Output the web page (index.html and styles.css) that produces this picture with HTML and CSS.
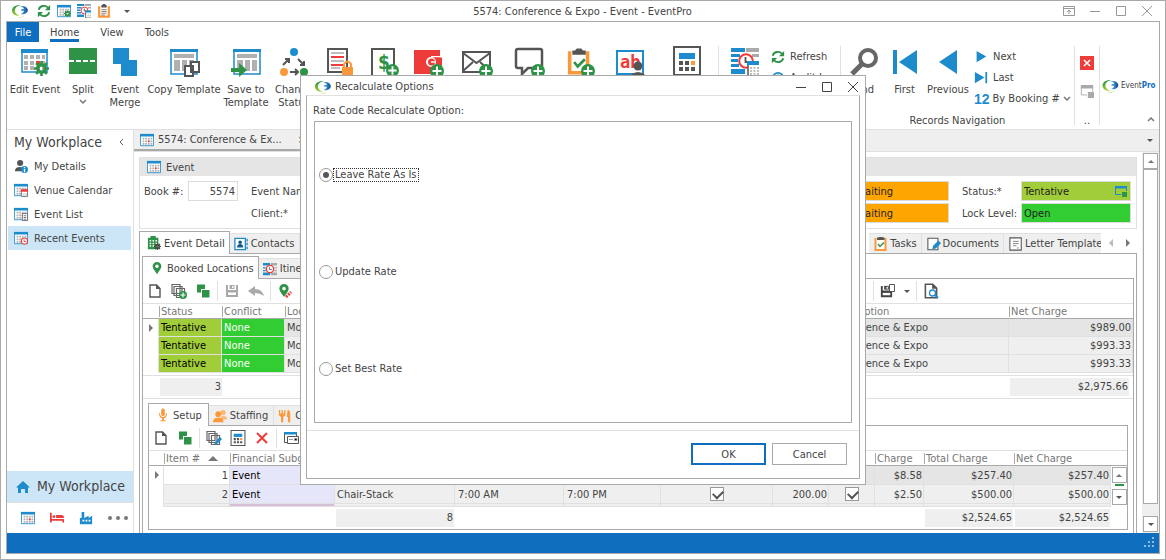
FILE: index.html
```
<!DOCTYPE html>
<html lang="en">
<head>
    <meta charset="UTF-8">
    <meta name="viewport" content="width=device-width, initial-scale=1.0">
    <title>5574: Conference &amp; Expo - Event - EventPro</title>
    <link rel="stylesheet" href="styles.css">
</head>
<body>
    <!-- icon sprite -->
    <svg class="sprite" aria-hidden="true">
        <defs>
            <linearGradient id="gGreen" x1="0" y1="0" x2="0" y2="1"><stop offset="0" stop-color="#1d8f3f"/><stop offset="1" stop-color="#a5d12e"/></linearGradient>
            <linearGradient id="gBlue" x1="0" y1="0" x2="1" y2="0"><stop offset="0" stop-color="#4cc0e8"/><stop offset="1" stop-color="#12479a"/></linearGradient>
        </defs>
        <symbol id="logo" viewBox="0 0 16 14">
            <path fill="url(#gGreen)" d="M9 1C4 .6 0 3 0 6.500c0 3.500 3.500 5.600 8 5.300C5 11 2.800 9 2.800 6.600 2.800 4 5 1.800 9 1z"/>
            <path fill="url(#gBlue)" d="M8 2.200c4-.6 7.800 1 7.800 4 0 2.800-3.300 4.600-7.300 3.800 1.800-.5 3.200-1.600 3.500-3.200H8.500q1.500-.8.500-1.800H12C11.500 3.500 10 2.500 8 2.200z"/>
            <path fill="#b9dc6a" d="M4 12.700c3 .8 6 .3 8-1-1.500 1.800-4.500 2.500-8 1z"/>
        </symbol>
        <symbol id="refresh" viewBox="0 0 16 16">
            <path fill="none" stroke="#2e9247" stroke-width="2.200" d="M2 6.500a6 5.500 0 0 1 10.500-2.300M14 9.500A6 5.500 0 0 1 3.500 11.800"/>
            <path fill="#2e9247" d="M15 1v6H9zM1 15V9h6z"/>
        </symbol>
        <symbol id="cal" viewBox="0 0 16 16">
            <path fill="#fff" stroke="#1e8bcd" d="M.5 2.500h15v12H.500z"/><path fill="#1e8bcd" d="M0 1h16v3H0z"/>
            <path stroke="#b0b0b0" stroke-width="2" stroke-dasharray="2 1" d="M3 6.500h11M3 9.500h11M3 12.500h11"/>
            <path fill="#ee3c3a" d="M9 8.500h2v2H9z"/>
        </symbol>
        <symbol id="gear" viewBox="0 0 16 16">
            <circle cx="8" cy="8" r="4" fill="none" stroke="currentColor" stroke-width="3.500"/>
            <path stroke="currentColor" stroke-width="2.800" d="M8 0v3M8 13v3M0 8h3M13 8h3M2.300 2.300l2.200 2.200M11.500 11.500l2.200 2.200M2.300 13.700l2.200-2.200M11.500 4.500l2.200-2.200"/>
        </symbol>
        <symbol id="itin" viewBox="0 0 28 28">
            <path fill="#1e8bcd" d="M0 0h14v4H0zM0 6h9v3H0zM0 11h7v3H0zM0 16h8v3H0zM0 21h14v5H0z"/>
            <path fill="#a9a9a9" d="M15 0h13v4H15zM21 6h7v3h-7z"/>
            <circle cx="15" cy="13" r="6.800" fill="#fff" stroke="#ee3c3a" stroke-width="2"/>
            <path fill="none" stroke="#555" stroke-width="1.800" d="M14.500 9v5h4"/>
            <path fill="#fff" stroke="#555" stroke-width="1.500" d="M17 14h12v14H17z"/><path fill="#1e8bcd" d="M16 13h14v4H16z"/>
            <path stroke="#aaa" stroke-width="1.500" stroke-dasharray="2 1.500" d="M19 20h9M19 23h9M19 26h9"/>
        </symbol>
        <symbol id="itin-small" viewBox="0 0 16 16">
            <path fill="#1e8bcd" d="M0 1h8v3H0zM0 6h3v1.500H0zM0 9h3v1.500H0zM0 12h8v3H0z"/>
            <path fill="#a9a9a9" d="M9 1h7v3H9zM13 6h3v1.500h-3zM13 9h3v1.500h-3zM9 12h7v3H9z"/>
            <circle cx="8" cy="8" r="4.200" fill="#fff" stroke="#ee3c3a" stroke-width="1.500"/>
            <path fill="none" stroke="#555" d="M7.500 6v2.500H10"/>
        </symbol>
        <symbol id="task" viewBox="0 0 28 28">
            <path fill="#fff" stroke="#fb983a" stroke-width="4" d="M3 2v24h20V2"/>
            <path fill="#555" d="M6 1h3l2-2h5l2 2h3v5H6z"/><path fill="none" stroke="#2e9247" stroke-width="3" d="M8 14l4 5 8-8"/>
        </symbol>
        <symbol id="clip" viewBox="0 0 16 16">
            <path fill="#fff" stroke="#fb983a" stroke-width="2.500" d="M2.500 2.500v12h11v-12"/><path fill="#555" d="M5 1h1.500V0h3v1H11v3H5z"/>
            <path stroke="#777" d="M5 6.500h6M5 8.500h6M5 10.500h6M5 12.500h4"/>
        </symbol>
        <symbol id="plus" viewBox="0 0 14 14">
            <circle cx="7" cy="7" r="7" fill="#2e9247"/><path stroke="#fff" stroke-width="2" d="M7 2.500v9M2.500 7h9"/>
        </symbol>
        <symbol id="calc" viewBox="0 0 28 30">
            <path fill="#fff" stroke="#555" stroke-width="2" d="M1 1h26v28H1z"/><path fill="#1e8bcd" d="M6 7h16v6H6z"/>
            <path fill="#555" d="M6 15h4v4H6zM12 15h4v4h-4zM6 21h4v4H6zM12 21h4v4h-4zM18 21h4v4h-4z"/><path fill="#fb983a" d="M18 15h4v4h-4z"/>
        </symbol>
        <symbol id="page" viewBox="0 0 16 16"><path fill="#fff" stroke="#555" stroke-width="1.400" d="M3 2h6.500L13 5.500V14H3z"/><path fill="#555" d="M9 1.500v4.500h4.500z"/></symbol>
        <symbol id="pages" viewBox="0 0 16 16"><path fill="#fff" stroke="#666" stroke-width="1.200" d="M1 1.500h8v9H1zM3 3.500h8v9H3zM5.500 5.500h8v9h-8z"/></symbol>
        <symbol id="squares" viewBox="0 0 16 16"><path fill="#2e9247" d="M2 1.500h8V6H6v3.500H2z"/><path fill="#2e9247" d="M7 7h7.500v7.500H7z"/></symbol>
        <symbol id="pin" viewBox="0 0 16 16"><path fill="#2e9247" d="M8 1a5 5 0 0 1 5 5c0 3-3.500 6-5 9-1.500-3-5-6-5-9a5 5 0 0 1 5-5z"/><circle cx="8" cy="6" r="1.900" fill="#fff"/></symbol>
        <symbol id="save" viewBox="0 0 16 16"><path fill="currentColor" d="M2 2h2v5h8V2h2v12H2z"/><path fill="#fff" d="M4 9.500h8V12H4z"/><path fill="currentColor" d="M5.500 2h5v4h-5z"/><path fill="#fff" d="M8 3h1.500v2H8z"/></symbol>
    </svg>

    <div class="window">
        <header class="titlebar">
            <div class="quick">
                <svg class="icon"><use href="#logo"/></svg>
                <button aria-label="Refresh"><svg class="icon"><use href="#refresh"/></svg></button>
                <button aria-label="Edit event"><svg class="icon green" viewBox="0 0 16 16"><use href="#cal" width="16" height="16"/><use href="#gear" x="8" y="7" width="8" height="8"/></svg></button>
                <button aria-label="Itinerary"><svg class="icon"><use href="#itin"/></svg></button>
                <button aria-label="Tasks"><svg class="icon"><use href="#clip"/></svg></button>
                <button aria-label="Customize" class="customize"><i class="caret"></i></button>
            </div>
            <div class="title">5574: Conference &amp; Expo - Event - EventPro</div>
            <div class="winbtns">
                <button aria-label="Ribbon options"><svg viewBox="0 0 12 12"><path d="M.5 1.500h11v9H.500zM1 3.500h10M6 9V5M4 7l2-2 2 2"/></svg></button>
                <button aria-label="Minimize"><svg viewBox="0 0 12 12"><path d="M1 6.500h10"/></svg></button>
                <button aria-label="Maximize"><svg viewBox="0 0 12 12"><path d="M1.500 1.500h9v9h-9z"/></svg></button>
                <button aria-label="Close"><svg viewBox="0 0 12 12"><path d="M1 1l10 10M11 1L1 11"/></svg></button>
            </div>
        </header>

        <div class="frame">
            <nav class="menu">
                <a href="#" class="file">File</a>
                <a href="#" class="current">Home</a>
                <a href="#">View</a>
                <a href="#">Tools</a>
            </nav>

            <div class="ribbon">
                <div class="group">
                    <div class="tools tools-event">
                        <button><svg class="big green" viewBox="0 0 28 28"><path fill="#fff" stroke="#1e8bcd" stroke-width="1.500" d="M1 2h25v22H1z"/><path fill="#1e8bcd" d="M0 1h27v4H0z"/><path stroke="#b0b0b0" stroke-width="4" stroke-dasharray="4 2" d="M3 9h21M3 15h21M3 20h21"/><path fill="#ee3c3a" d="M15 13h4v4h-4z"/><use href="#gear" x="13" y="13" width="15" height="15"/></svg>Edit Event</button>
                        <button><svg class="big" viewBox="0 0 28 28"><path fill="#2e9247" d="M0 0h28v26H0z"/><path stroke="#fff" stroke-width="2" stroke-dasharray="5 2" d="M0 13h28"/></svg>Split<svg class="down" viewBox="0 0 8 5"><path d="M1 1l3 3 3-3"/></svg></button>
                        <button><svg class="big" viewBox="0 0 28 28"><path fill="#1e8bcd" d="M2 0h16v12h8v16H10V16H2z"/></svg>Event<br>Merge</button>
                        <button><svg class="big" viewBox="0 0 28 28"><path fill="#fff" stroke="#1e8bcd" stroke-width="1.500" d="M1 2h26v24H1z"/><path fill="#1e8bcd" d="M0 1h28v3H0z"/><path fill="#b0b0b0" d="M4 6h20v4H4zM4 12h6v11H4zM12 12h5v11h-5zM19 12h5v11h-5z"/><path fill="#fff" stroke="#555" stroke-width="2" d="M21 14h8v10h-8zM15 18h8v10h-8z"/></svg>Copy Template</button>
                        <button><svg class="big" viewBox="0 0 28 28"><path fill="#fff" stroke="#1e8bcd" stroke-width="1.500" d="M2 2h26v24H2z"/><path fill="#1e8bcd" d="M1 1h28v3H1z"/><path fill="#b0b0b0" d="M5 6h20v4H5zM5 12h6v11H5zM13 12h5v11h-5zM20 12h5v11h-5z"/><path fill="#2e9247" d="M-1 20h8v-5l8 7-8 7v-5h-8z"/></svg>Save to<br>Template</button>
                        <button><svg class="big" viewBox="0 0 28 28"><circle cx="14" cy="4" r="4" fill="#1e8bcd"/><circle cx="4" cy="24" r="4" fill="#fb983a"/><circle cx="24" cy="24" r="4" fill="#2e9247"/><path fill="none" stroke="#555" stroke-width="2" d="M3 17l6-6M5 11h4v4M18 11l6 6M24 13v4h-4M10 24h8M15 21l3 3-3 3"/></svg>Change<br>Status</button>
                        <button aria-label="Lock"><svg class="big" viewBox="0 0 28 28"><path fill="#fff" stroke="#555" stroke-width="2" d="M2 1h19v23H2z"/><path stroke="#a9a9a9" stroke-width="1.500" d="M5 5h13M5 13h13M5 20h9"/><path stroke="#ee3c3a" stroke-width="2" d="M5 9h13M5 17h13"/><path fill="#fb983a" d="M16 19h11v10H16z"/><path fill="none" stroke="#fb983a" stroke-width="2" d="M18 20v-4q3.500-5 7 0v4"/></svg></button>
                        <button aria-label="Add charge"><svg class="big" viewBox="0 0 28 28"><path fill="#fff" stroke="#555" stroke-width="2" d="M1 1h22v27H1z"/><text x="7" y="21" class="dollar">$</text><use href="#plus" x="15" y="16" width="13" height="13"/></svg></button>
                        <button aria-label="Add payment"><svg class="big" viewBox="0 0 28 28"><path fill="#ee3c3a" d="M-1 2h26v24H-1z"/><path fill="#fff" d="M16 8h11v1.500H16z"/><path fill="#ee3c3a" d="M16 9.500h11V18H16z"/><circle cx="16" cy="14" r="5" fill="#fff"/><circle cx="16.500" cy="14" r="3.500" fill="#ee3c3a"/><path stroke="#fff" stroke-width="1.500" d="M16 14h4"/><use href="#plus" x="15" y="16" width="14" height="14"/></svg></button>
                        <button aria-label="Add email"><svg class="big" viewBox="0 0 28 28"><path fill="none" stroke="#555" stroke-width="2" d="M0 4h27v20H0zM0 5l13.500 10L27 5M0 23l10-9M27 23l-10-9"/><use href="#plus" x="16" y="16" width="14" height="14"/></svg></button>
                        <button aria-label="Add note"><svg class="big" viewBox="0 0 28 28"><path fill="#fff" stroke="#555" stroke-width="2.500" d="M2 1h22q2 0 2 2v15q0 2-2 2H12l-6 6v-6H2q-2 0-2-2V3q0-2 2-2z"/><use href="#plus" x="15" y="16" width="14" height="14"/></svg></button>
                        <button aria-label="Add task"><svg class="big" viewBox="0 0 28 28"><use href="#task" width="25" height="28"/><use href="#plus" x="14" y="16" width="14" height="14"/></svg></button>
                        <button aria-label="Rename"><svg class="big" viewBox="0 0 28 28"><path fill="#fff" stroke="#1e8bcd" stroke-width="2" d="M1 3h26v23H1z"/><text x="4" y="20" class="ab">ab</text><circle cx="22" cy="18" r="4.500" fill="#555"/><path fill="#555" d="M14 30q0-5 8-6 8 1 8 6z"/></svg></button>
                        <button aria-label="Calculate"><svg class="big up"><use href="#calc"/></svg></button>
                    </div>
                </div>
                <div class="group">
                    <div class="tools">
                        <button class="w50" aria-label="Itinerary"><svg class="big"><use href="#itin"/></svg></button>
                        <div class="stack w69">
                            <button><svg class="icon"><use href="#refresh"/></svg>Refresh</button>
                            <button><svg class="icon" viewBox="0 0 16 16"><circle cx="8" cy="8" r="6" fill="none" stroke="#1e8bcd" stroke-width="2"/><path fill="none" stroke="#555" stroke-width="1.500" d="M8 4v4h3"/></svg>Audit Log</button>
                        </div>
                    </div>
                </div>
                <div class="group">
                    <div class="tools">
                        <button class="w46"><svg class="big" viewBox="0 0 28 28"><circle cx="18" cy="10" r="8" fill="none" stroke="#666" stroke-width="4"/><path stroke="#666" stroke-width="5" d="M12 16L2 26"/></svg>Find</button>
                        <button class="w35"><svg class="big" viewBox="0 0 28 28"><path fill="#1e8bcd" d="M2 2h4v24H2zM26 2v24L8 14z"/></svg>First</button>
                        <button class="w50"><svg class="big" viewBox="0 0 28 28"><path fill="#1e8bcd" d="M23 2v24L5 14z"/></svg>Previous</button>
                        <div class="stack nav-stack">
                            <button><svg class="icon" viewBox="0 0 16 16"><path fill="#1e8bcd" d="M3 1v13l11-6.500z"/></svg>Next</button>
                            <button><svg class="icon" viewBox="0 0 16 16"><path fill="#1e8bcd" d="M1 1v13l11-6.500zM13 1h2v13h-2z"/></svg>Last</button>
                            <button class="booking"><b class="twelve">12</b>By Booking #<svg class="down" viewBox="0 0 8 5"><path d="M1 1l3 3 3-3"/></svg></button>
                        </div>
                    </div>
                    <div class="caption">Records Navigation</div>
                </div>
                <div class="group">
                    <div class="tools closers">
                        <button aria-label="Close"><svg class="icon" viewBox="0 0 16 16"><path fill="#ee3c3a" d="M0 0h16v16H0z"/><path stroke="#fff" stroke-width="1.800" d="M4.500 4.500l7 7M11.500 4.500l-7 7"/></svg></button>
                        <button aria-label="Windows"><svg class="icon" viewBox="0 0 16 16"><path fill="none" stroke="#a9a9a9" d="M8 12.500H1.500v-9h13V9"/><path fill="#a9a9a9" d="M1 1h14v4H1zM9 9h7v7H9z"/></svg></button>
                    </div>
                    <div class="caption">..</div>
                </div>
                <div class="brand">
                    <svg class="brand-mark"><use href="#logo"/></svg>Event<b>Pro</b>
                    <button class="collapse" aria-label="Collapse ribbon"><svg class="down" viewBox="0 0 8 5"><path d="M1 4l3-3 3 3"/></svg></button>
                </div>
            </div>

            <div class="body">
                <aside class="side">
                    <h2>My Workplace<svg viewBox="0 0 6 8"><path d="M5 1L2 4l3 3"/></svg></h2>
                    <ul>
                        <li><a href="#"><svg class="icon" viewBox="0 0 16 16"><circle cx="7" cy="4.500" r="3.500" fill="#555"/><path fill="#555" d="M1 14q0-5 6-5 5 0 5 5z"/><circle cx="12" cy="12" r="4" fill="#1e8bcd"/><path stroke="#fff" stroke-width="1.500" d="M12 9v1.200M12 11v4"/></svg>My Details</a></li>
                        <li><a href="#"><svg class="icon" viewBox="0 0 16 16"><use href="#cal" width="16" height="16"/><path fill="#fff" stroke="#777" d="M8.500 8.500h7v7h-7z"/><path fill="#ee3c3a" d="M8 7h8v3H8z"/><path stroke="#999" stroke-dasharray="1 1" d="M10 12.500h5M10 14h5"/></svg>Venue Calendar</a></li>
                        <li><a href="#"><svg class="icon" viewBox="0 0 16 16"><use href="#cal" width="16" height="16"/><path fill="#fff" stroke="#666" d="M9.500 7.500h6v8h-6z"/><path stroke="#666" d="M11 10h3M11 12h3M11 14h3"/></svg>Event List</a></li>
                        <li class="selected"><a href="#"><svg class="icon" viewBox="0 0 16 16"><use href="#cal" width="16" height="16"/><circle cx="12" cy="11.500" r="3.500" fill="#fff" stroke="#ee3c3a" stroke-width="1.200"/><path fill="none" stroke="#ee3c3a" d="M11.500 9.500v2.500H14"/></svg>Recent Events</a></li>
                    </ul>
                    <a href="#" class="workplace"><svg viewBox="0 0 14 14"><path fill="#1e8bcd" d="M7 1l7 6.500h-2V13H9V9H5v4H2V7.500H0z"/></svg>My Workplace</a>
                    <div class="modules">
                        <button aria-label="Calendar"><svg class="icon"><use href="#cal"/></svg></button>
                        <button aria-label="Accommodation"><svg class="icon" viewBox="0 0 16 16"><path fill="#ee3c3a" d="M0 2h2v7h14v4h-2v-2H2v2H0zM7 4.500h6q3 0 3 3.500H7z"/><circle cx="4.500" cy="6.500" r="1.600" fill="#ee3c3a"/></svg></button>
                        <button aria-label="Venue"><svg class="icon" viewBox="0 0 16 16"><path fill="#1e8bcd" d="M1 8h2V1h3v7l5-2.500V8l4-2.500V15H1z"/><path fill="#fff" d="M4 10h2v2H4zM7.500 10h2v2h-2zM11 10h2v2h-2z"/></svg></button>
                        <button aria-label="More"><svg class="dots" viewBox="0 0 20 4"><circle cx="2" cy="2" r="2"/><circle cx="10" cy="2" r="2"/><circle cx="18" cy="2" r="2"/></svg></button>
                    </div>
                </aside>

                <main class="main">
                    <div class="doctabs">
                        <div class="doctab"><svg class="icon"><use href="#cal"/></svg>5574: Conference &amp; Ex...<span>×</span></div>
                        <i class="caret"></i>
                    </div>
                    <div class="workarea">
                        <div class="content">
                            <section class="panel">
                                <h3><svg class="icon"><use href="#cal"/></svg>Event</h3>
                                <div class="fields">
                                    <label for="book">Book #:</label><input id="book" class="num" value="5574">
                                    <label for="ename" class="gap">Event Name:</label><input id="ename">
                                    <input class="orange" aria-label="Event approval" value="Waiting">
                                    <label for="status" class="gap">Status:*</label>
                                    <span class="picker"><input id="status" class="lime" value="Tentative"><svg viewBox="0 0 12 12"><path fill="none" stroke="#1e8bcd" d="M6 9.500H.500v-8h11V6"/><path fill="#1e8bcd" d="M0 1h12v2.500H0z"/><path fill="#2e9247" d="M7 7h5v5H7z"/></svg></span>
                                    <label for="client" class="gap client">Client:*</label><input id="client">
                                    <input class="orange" aria-label="Client approval" value="Waiting">
                                    <label for="lock" class="gap">Lock Level:</label><input id="lock" class="green-bg" value="Open">
                                </div>
                            </section>

                            <div class="tabs">
                                <button class="tab on"><svg class="icon" viewBox="0 0 16 16"><path fill="#2e9247" d="M1 2h3V0h6v2h3v13H1z"/><path stroke="#fff" stroke-width="1.800" stroke-dasharray="1.800 1.500" d="M3 5.500h9M3 8.500h9M3 11.500h9"/><use href="#gear" x="8" y="8" width="8" height="8"/></svg>Event Detail</button>
                                <button class="tab"><svg class="icon" viewBox="0 0 16 16"><path fill="#fff" stroke="#1e8bcd" stroke-width="1.500" d="M1 1.500h12v13H1z"/><circle cx="7" cy="6" r="2" fill="#14568c"/><path fill="#14568c" d="M3.500 12q0-4 3.500-4t3.500 4z"/><path stroke="#1e8bcd" stroke-width="1.500" d="M15 2v3M15 6.500v3M15 11v3"/></svg>Contacts</button>
                                <div class="tabs-end">
                                    <button class="tab"><svg class="icon"><use href="#task"/></svg>Tasks</button>
                                    <button class="tab"><svg class="icon" viewBox="0 0 16 16"><path fill="#fff" stroke="#555" stroke-width="1.200" d="M1 1.500h11.500v13H1z"/><path fill="#1e8bcd" d="M6 14l1-4 6-6 3 3-6 6z"/></svg>Documents</button>
                                    <button class="tab last"><svg class="icon" viewBox="0 0 16 16"><path fill="#fff" stroke="#555" stroke-width="1.200" d="M1 1h13v14H1z"/><path stroke="#777" d="M4.500 5h6.500M4.500 7.500h6.500M4.500 10h4M9 12.500h2"/></svg>Letter Templates</button>
                                </div>
                                <div class="tab-arrows"><i class="left"></i><i class="right"></i></div>
                            </div>

                            <div class="page page-detail">
                                <div class="tabs">
                                    <button class="tab on"><svg class="icon"><use href="#pin"/></svg>Booked Locations</button>
                                    <button class="tab"><svg class="icon"><use href="#itin-small"/></svg>Itinerary</button>
                                </div>
                                <div class="page page-booked">
                                    <div class="toolbar">
                                        <button aria-label="New"><svg class="icon"><use href="#page"/></svg></button>
                                        <button aria-label="Add copies"><svg class="icon" viewBox="0 0 16 16"><use href="#pages" width="16" height="16"/><use href="#plus" x="8" y="8" width="8" height="8"/></svg></button>
                                        <button aria-label="Duplicate"><svg class="icon"><use href="#squares"/></svg></button>
                                        <hr>
                                        <button aria-label="Save" class="dim"><svg class="icon"><use href="#save"/></svg></button>
                                        <button aria-label="Undo" class="dim"><svg class="icon" viewBox="0 0 16 16"><path fill="currentColor" d="M0 8l7-5v3q7 0 9 7-4-3-9-3v3z"/></svg></button>
                                        <hr>
                                        <button aria-label="Location"><svg class="icon" viewBox="0 0 16 16"><use href="#pin" x="-1" width="16" height="15"/><path stroke="#ee3c3a" stroke-width="3" stroke-dasharray="2 1" d="M9 14l5-5"/></svg></button>
                                        <div class="toolbar-end">
                                            <hr>
                                            <button aria-label="Save layout"><svg class="icon" viewBox="0 0 16 16"><use href="#save" x="-1" y="1" width="15" height="15"/><path fill="#fff" stroke="#555" d="M9.500 1.500h5v7h-5z"/></svg></button>
                                            <i class="caret"></i>
                                            <hr>
                                            <button aria-label="Preview"><svg class="icon" viewBox="0 0 16 16"><use href="#page" x="-1" y="-1" width="18" height="18"/><circle cx="9.500" cy="10" r="3" fill="#fff" stroke="#1e8bcd" stroke-width="1.300"/><path stroke="#1e8bcd" stroke-width="2" d="M12 12l3 3"/></svg></button>
                                        </div>
                                    </div>
                                    <table class="grid">
                                        <colgroup><col class="c16"><col class="c63"><col class="c63"><col><col class="c178"><col class="c124"></colgroup>
                                        <thead>
                                            <tr><th></th><th><span>Status</span></th><th><span>Conflict</span></th><th><span>Location</span></th><th><span>Description</span></th><th><span>Net Charge</span></th></tr>
                                        </thead>
                                        <tbody>
                                            <tr class="focus"><td class="ind"><i class="right"></i></td><td class="tent">Tentative</td><td class="none">None</td><td>Mo</td><td>Conference &amp; Expo</td><td class="num">$989.00</td></tr>
                                            <tr><td class="ind"></td><td class="tent">Tentative</td><td class="none">None</td><td>Mo</td><td>Conference &amp; Expo</td><td class="num">$993.33</td></tr>
                                            <tr><td class="ind"></td><td class="tent">Tentative</td><td class="none">None</td><td>Mo</td><td>Conference &amp; Expo</td><td class="num">$993.33</td></tr>
                                        </tbody>
                                    </table>
                                    <div class="totals totals-booked"><output>3</output><output>$2,975.66</output></div>

                                    <div class="setup">
                                        <div class="tabs">
                                            <button class="tab on"><svg class="icon" viewBox="0 0 16 16"><path fill="#fb983a" d="M6 2q2-3 4 0v6q-2 3-4 0zM7 11h2v3h2v1H5v-1h2z"/><path fill="none" stroke="#fb983a" stroke-width="1.300" d="M4 6q0 5 4 5t4-5"/></svg>Setup</button>
                                            <button class="tab"><svg class="icon" viewBox="0 0 16 16"><circle cx="11.500" cy="4" r="3" fill="#fcb875"/><path fill="#fcb875" d="M8 12q0-4 4-4t4 4z"/><circle cx="6" cy="6" r="3.300" fill="#fb983a"/><path fill="#fb983a" d="M0 15q0-5 6-5t6 5z"/></svg>Staffing</button>
                                            <button class="tab"><svg class="icon" viewBox="0 0 16 16"><path fill="#fb983a" d="M1 1h1.500v4H4V1h1.500v4H7V1h1.500v6L6 9v6H3.500V9L1 7z"/><path fill="#fb983a" d="M11 1q3 0 3 5v9h-2.500V9H10z"/></svg>Catering</button>
                                        </div>
                                        <div class="page page-setup">
                                            <div class="toolbar">
                                                <button aria-label="New"><svg class="icon"><use href="#page"/></svg></button>
                                                <button aria-label="Duplicate"><svg class="icon"><use href="#squares"/></svg></button>
                                                <hr>
                                                <button aria-label="Edit copies"><svg class="icon" viewBox="0 0 16 16"><use href="#pages" width="16" height="16"/><path stroke="#1e8bcd" stroke-width="3" d="M9 14l6-6"/></svg></button>
                                                <button aria-label="Recalculate"><svg class="icon"><use href="#calc"/></svg></button>
                                                <button aria-label="Delete"><svg class="icon" viewBox="0 0 16 16"><path stroke="#ee3c3a" stroke-width="2" d="M3 3l10 10M13 3L3 13"/></svg></button>
                                                <hr>
                                                <button aria-label="Details"><svg class="icon" viewBox="0 0 16 16"><path fill="#fff" stroke="#555" d="M1.500 2.500h12v10h-12z"/><path fill="#1e8bcd" d="M1 2h13v2.500H1z"/><path fill="#fff" stroke="#555" d="M4.500 6.500h11v7h-11z"/><path stroke="#999" d="M6 9.500h4M11.500 8.500h2.500v2h-2.500z"/></svg></button>
                                            </div>
                                            <div class="scrolled">
                                                <table class="grid">
                                                    <colgroup><col class="c15"><col class="c66"><col class="c105"><col class="c120"><col class="c109"><col class="c97"><col><col class="c56"><col class="c46"><col class="c49"><col class="c90"><col class="c97"></colgroup>
                                                    <thead>
                                                        <tr><th></th><th><span>Item # <i class="sort"></i></span></th><th><span>Financial Subgroup</span></th><th><span>Item</span></th><th><span>Start</span></th><th><span>End</span></th><th></th><th></th><th></th><th><span>Charge</span></th><th><span>Total Charge</span></th><th><span>Net Charge</span></th></tr>
                                                    </thead>
                                                    <tbody>
                                                        <tr class="focus"><td class="ind"><i class="right"></i></td><td class="num white">1</td><td class="lav">Event</td><td></td><td></td><td></td><td></td><td></td><td></td><td class="num">$8.58</td><td class="num">$257.40</td><td class="num">$257.40</td></tr>
                                                        <tr><td class="ind"></td><td class="num">2</td><td class="lav">Event</td><td>Chair-Stack</td><td class="time">7:00 AM</td><td class="time">7:00 PM</td><td class="tick"><input type="checkbox" aria-label="Included" checked></td><td class="num">200.00</td><td class="tick"><input type="checkbox" aria-label="Taxable" checked></td><td class="num">$2.50</td><td class="num">$500.00</td><td class="num">$500.00</td></tr>
                                                        <tr class="sliver"><td class="ind"></td><td></td><td class="thistle"></td><td></td><td></td><td></td><td></td><td></td><td></td><td></td><td></td><td></td></tr>
                                                    </tbody>
                                                </table>
                                                <div class="minibar"><b></b><button aria-label="Scroll up"><i class="upar"></i></button><u></u><button aria-label="Scroll down"><i class="caret"></i></button></div>
                                            </div>
                                            <div class="totals totals-setup"><output>8</output><output>$2,524.65</output><output>$2,524.65</output></div>
                                        </div>
                                    </div>
                                </div>
                            </div>
                        </div>
                        <div class="scrollbar"><button aria-label="Scroll up"><i class="upar"></i></button><div class="thumb"></div><button aria-label="Scroll down"><i class="caret"></i></button></div>
                    </div>
                </main>
            </div>

            <footer class="statusbar"><svg viewBox="0 0 12 12"><path d="M8 0h2v2H8zM4 4h2v2H4zM8 4h2v2H8zM0 8h2v2H0zM4 8h2v2H4zM8 8h2v2H8z"/></svg></footer>
        </div>
    </div>

    <div class="overlay">
        <form class="dialog" role="dialog" aria-labelledby="dlgTitle">
            <div class="dialog-title">
                <svg class="icon"><use href="#logo"/></svg><span id="dlgTitle">Recalculate Options</span>
                <div class="winbtns dark">
                    <button type="button" aria-label="Minimize"><svg viewBox="0 0 12 12"><path d="M1 6.500h10"/></svg></button>
                    <button type="button" aria-label="Maximize"><svg viewBox="0 0 12 12"><path d="M1.500 1.500h9v9h-9z"/></svg></button>
                    <button type="button" aria-label="Close"><svg viewBox="0 0 12 12"><path d="M1 1l10 10M11 1L1 11"/></svg></button>
                </div>
            </div>
            <div class="dialog-body">
                <p id="rateLabel">Rate Code Recalculate Option:</p>
                <div class="options" role="radiogroup" aria-labelledby="rateLabel">
                    <label><input type="radio" name="rate" checked><span>Leave Rate As Is</span></label>
                    <label><input type="radio" name="rate"><span>Update Rate</span></label>
                    <label><input type="radio" name="rate"><span>Set Best Rate</span></label>
                </div>
                <div class="actions">
                    <button type="button" class="ok">OK</button>
                    <button type="button">Cancel</button>
                </div>
            </div>
        </form>
    </div>
</body>
</html>
```
FILE: styles.css
```
* {
    box-sizing: border-box;
}

body {
    margin: 0;
    background: #fff;
    color: #444;
    font-family: "DejaVu Sans Condensed", "DejaVu Sans", sans-serif;
    font-size: 11px;
    line-height: 13px;
    overflow: hidden;
}

button, input {
    font: inherit;
    color: inherit;
    margin: 0;
}

button {
    background: none;
    border: 0;
    padding: 0;
}

a {
    color: inherit;
    text-decoration: none;
}

svg {
    display: block;
    flex: none;
    overflow: visible;
}

.sprite {
    position: absolute;
    width: 0;
    height: 0;
}

.icon {
    width: 14px;
    height: 14px;
}

.green {
    color: #2e9247;
}

/* small arrows */
.caret, .upar, .sort, .left, .right {
    display: inline-block;
    width: 0;
    height: 0;
    border: 3px solid transparent;
    vertical-align: middle;
}

.caret {
    border-top-color: #555;
    border-bottom: 0;
}

.upar, .sort {
    border-bottom-color: #777;
    border-top: 0;
}

.sort {
    border-width: 0 5px 5px;
    margin-left: 5px;
}

.left, .right {
    border-width: 4px;
}

.left {
    border-right-color: #bbb;
    border-left: 0;
}

.right {
    border-left-color: #777;
    border-right: 0;
}

/* main window */
.window {
    height: 100vh;
    border: 1px solid #a9a9a9;
    display: flex;
    flex-direction: column;
}

.titlebar {
    height: 20px;
    flex: none;
    display: flex;
    align-items: center;
    padding: 0 11px;
}

.quick, .winbtns {
    flex: 1;
    display: flex;
    align-items: center;
    gap: 6px;
}

.quick > .icon {
    width: 16px;
    margin-right: 3px;
}

.customize {
    display: flex;
    margin-left: 7px;
}

.winbtns {
    justify-content: flex-end;
    gap: 14px;
}

.titlebar .winbtns {
    padding-right: 1px;
}

.winbtns svg {
    width: 12px;
    height: 12px;
    fill: none;
    stroke: #999;
}

.winbtns.dark svg {
    stroke: #444;
}

.frame {
    flex: 1;
    min-height: 0;
    margin: 0 5px 5px;
    border: 1px solid #a9a9a9;
    display: flex;
    flex-direction: column;
}

.menu {
    display: flex;
    height: 20px;
    flex: none;
}

.menu a {
    margin-left: 21px;
    padding-top: 4px;
    height: 20px;
}

.menu .file {
    margin: 0;
    width: 32px;
    text-align: center;
    background: #106ebe;
    color: #fff;
}

.menu .current {
    margin-left: 11px;
    border-bottom: 3px solid #106ebe;
}

/* ribbon */
.ribbon {
    height: 88px;
    flex: none;
    display: flex;
    padding: 4px 0;
    border-bottom: 1px solid #e0e0e0;
}

.group {
    display: flex;
    flex-direction: column;
    justify-content: space-between;
    border-right: 1px solid #e0e0e0;
}

.tools {
    display: flex;
    padding-top: 2px;
}

.tools-event {
    display: grid;
    grid-template-columns: 56px 40px 44px 74px 50px 46px 46px 44px 44px 52px 54px 48px 50px 63px;
}

.tools > button {
    display: flex;
    flex-direction: column;
    align-items: center;
    white-space: nowrap;
    align-self: start;
}

.big {
    width: 28px;
    height: 28px;
    margin-bottom: 7px;
}

.big.up {
    height: 30px;
    margin-top: -2px;
}

.dollar {
    fill: #2e9247;
    font-size: 19px;
    font-weight: bold;
}

.ab {
    fill: #ee3c3a;
    font: bold 17px "DejaVu Sans Mono", monospace;
}

.down {
    width: 8px;
    height: 5px;
    margin: 3px;
    fill: none;
    stroke: #777;
    stroke-width: 1.5;
}

.w35 {
    width: 35px;
}

.w46 {
    width: 46px;
}

.w50 {
    width: 52px;
}

.w69 {
    width: 69px;
}

.stack {
    margin-top: -2px;
}

.stack button {
    display: flex;
    align-items: center;
    height: 21px;
    gap: 5px;
    white-space: nowrap;
}

.stack .booking {
    gap: 3px;
}

.stack .down {
    margin: 0;
}

.nav-stack {
    width: 100px;
}

.twelve {
    color: #1e8bcd;
    font: bold 14px "Liberation Sans", sans-serif;
}

.caption {
    text-align: center;
    line-height: 8px;
}

.closers {
    flex-direction: column;
    gap: 14px;
    padding: 10px 5px 0;
}

.brand {
    flex: 1;
    display: flex;
    align-items: center;
    padding-left: 2px;
    font: 8px "DejaVu Sans Condensed", sans-serif;
    position: relative;
}

.brand b {
    color: #106ebe;
}

.brand-mark {
    width: 17px;
    height: 14px;
    margin-right: 2px;
}

.collapse {
    position: absolute;
    right: 1px;
    bottom: 0;
}

/* left navigation */
.body {
    flex: 1;
    min-height: 0;
    display: flex;
}

.side {
    width: 127px;
    flex: none;
    display: flex;
    flex-direction: column;
    border-right: 1px solid #e0e0e0;
}

.side h2 {
    display: flex;
    align-items: center;
    justify-content: space-between;
    margin: 0;
    height: 24px;
    padding: 0 9px 0 7px;
    font-size: 14px;
    font-weight: normal;
}

.side h2 svg {
    width: 6px;
    height: 8px;
    fill: none;
    stroke: #666;
}

.side ul {
    list-style: none;
    margin: 0;
    padding: 0 2px 0 1px;
    flex: 1;
}

.side li a {
    display: flex;
    align-items: center;
    gap: 6px;
    height: 24px;
    padding-left: 6px;
}

.side .selected, .workplace {
    background: #cde6f7;
}

.workplace {
    display: flex;
    align-items: center;
    height: 32px;
    gap: 7px;
    padding-left: 9px;
    font-size: 14px;
    border-bottom: 1px solid #e0e0e0;
}

.workplace svg {
    width: 14px;
    height: 14px;
}

.modules {
    height: 30px;
    display: flex;
    align-items: center;
    gap: 15px;
    padding-left: 14px;
}

.dots {
    width: 20px;
    height: 4px;
    fill: #777;
}

/* document area */
.main {
    flex: 1;
    min-width: 0;
    display: flex;
    flex-direction: column;
}

.doctabs {
    height: 22px;
    flex: none;
    display: flex;
    justify-content: space-between;
    align-items: center;
    padding-right: 6px;
    background: #efefef;
    border-bottom: 1px solid #e0e0e0;
}

.doctab {
    display: flex;
    align-items: center;
    align-self: stretch;
    gap: 4px;
    width: 172px;
    padding-left: 6px;
    border-bottom: 2px solid #a9a9a9;
}

.doctab span {
    margin-left: auto;
}

.workarea {
    flex: 1;
    min-height: 0;
    display: flex;
}

.content {
    flex: 1;
    min-width: 0;
    display: flex;
    flex-direction: column;
    padding: 5px 5px 0;
}

.panel {
    flex: none;
    border: 1px solid #e0e0e0;
    margin-bottom: 2px;
}

.panel h3 {
    display: flex;
    align-items: center;
    gap: 5px;
    margin: 0;
    height: 18px;
    padding-left: 7px;
    background: #e5e5e5;
    font-size: 11px;
    font-weight: normal;
}

.fields {
    display: grid;
    grid-template-columns: 44px 50px 80px 1fr 96px 72px 110px;
    grid-auto-rows: 20px;
    row-gap: 2px;
    align-items: center;
    padding: 5px 5px 5px 4px;
}

.fields input {
    width: 100%;
    height: 20px;
    min-width: 0;
    border: 1px solid #dcdcdc;
    padding: 0 2px;
}

.fields .gap {
    padding-left: 13px;
}

.fields .client {
    grid-column: 3;
}

.fields .orange {
    background: #ffa500;
    color: #222;
}

.fields .lime {
    background: #a2cd3a;
    color: #222;
}

.fields .green-bg {
    background: #32cd32;
    color: #222;
}

.picker {
    position: relative;
}

.picker svg {
    position: absolute;
    right: 4px;
    top: 4px;
    width: 12px;
    height: 12px;
}

.num {
    text-align: right;
}

.tabs {
    display: flex;
    align-items: flex-end;
    height: 22px;
    flex: none;
}

.tab {
    display: flex;
    align-items: center;
    gap: 3px;
    height: 20px;
    padding: 0 5px 0 4px;
    background: #efefef;
    border: 1px solid #e0e0e0;
    border-width: 1px 1px 0 0;
    white-space: nowrap;
}

.tab.on {
    position: relative;
    height: 23px;
    margin-bottom: -1px;
    padding: 0 4px 0 7px;
    background: #fff;
    border: 1px solid #a9a9a9;
    border-bottom: 0;
}

.setup .tab.on {
    padding-right: 6px;
}

.tabs-end {
    display: flex;
    margin-left: auto;
}

.tabs-end .tab {
    gap: 2px;
    padding: 0 4px 0 5px;
}

.tabs-end .last {
    width: 97px;
    overflow: hidden;
    padding-right: 0;
    border-right: 0;
}

.tab-arrows {
    display: flex;
    align-items: center;
    gap: 13px;
    height: 20px;
    padding: 0 7px 0 8px;
}

.page {
    border: 1px solid #a9a9a9;
}

.page-detail, .page-booked {
    flex: 1;
    min-height: 0;
    border-bottom: 0;
    display: flex;
    flex-direction: column;
}

.page-detail {
    padding: 2px 2px 0;
}

.setup {
    padding: 4px 5px 0;
}

.toolbar {
    display: flex;
    align-items: center;
    gap: 8px;
    height: 24px;
    flex: none;
    padding-left: 4px;
}

.toolbar .icon {
    width: 16px;
    height: 16px;
}

.toolbar hr {
    width: 1px;
    height: 20px;
    margin: 0 -2px;
    border: 0;
    background: #e0e0e0;
}

.dim {
    color: #a9a9a9;
}

.toolbar-end {
    display: flex;
    align-items: center;
    gap: 8px;
    width: 258px;
    margin-left: auto;
}

/* data grids */
.grid {
    width: 100%;
    table-layout: fixed;
    border-spacing: 0;
    border-top: 1px solid #e0e0e0;
}

.grid th {
    height: 15px;
    padding: 0;
    border-bottom: 1px solid #a9a9a9;
    text-align: left;
    font-weight: normal;
    color: #777;
    white-space: nowrap;
    overflow: hidden;
}

.grid th span {
    display: block;
    line-height: 11px;
    border-left: 1px solid #a9a9a9;
    padding-left: 1px;
}

.grid td {
    height: 18px;
    padding: 0 1px 0 2px;
    background: #efefef;
    border-right: 1px solid #e0e0e0;
    border-bottom: 1px solid #e0e0e0;
    white-space: nowrap;
    overflow: hidden;
}

.grid .focus td {
    background: #e5e5e5;
}

.grid tr td.ind {
    background: #fff;
    border-bottom-color: #fff;
    text-align: center;
    line-height: 8px;
}

.grid tr td.tent {
    background: #a2cd3a;
    color: #000;
}

.grid tr td.none {
    background: #32cd32;
    color: #fff;
}

.grid tr td.white {
    background: #fff;
}

.grid tr td.lav {
    background: #e6e6fa;
    color: #000;
}

.grid tr td.thistle {
    background: #d8bfd8;
}

.grid td.time {
    padding-left: 3px;
}

.grid td.tick {
    text-align: center;
    line-height: 14px;
}

.c15 { width: 15px; }
.c16 { width: 16px; }
.c46 { width: 46px; }
.c49 { width: 49px; }
.c56 { width: 56px; }
.c63 { width: 63px; }
.c66 { width: 66px; }
.c90 { width: 90px; }
.c97 { width: 97px; }
.c105 { width: 105px; }
.c109 { width: 109px; }
.c120 { width: 120px; }
.c124 { width: 124px; }
.c178 { width: 178px; }

.page-setup .grid td {
    height: 19px;
}

.page-setup .grid .sliver td {
    height: 3px;
    line-height: 1px;
}

input[type="checkbox"] {
    appearance: none;
    display: block;
    width: 14px;
    height: 14px;
    margin: 0 auto;
    border: 1px solid #999;
    background: #fff;
}

input[type="checkbox"]:checked::before {
    content: "";
    display: block;
    width: 8px;
    height: 5px;
    margin: 2px;
    border: 2px solid #555;
    border-width: 0 0 2px 2px;
    transform: rotate(-45deg);
}

.totals {
    display: grid;
    border-bottom: 1px solid #e0e0e0;
}

.totals output {
    background: #efefef;
    height: 18px;
    line-height: 18px;
    padding-right: 1px;
    text-align: right;
}

.totals-booked {
    grid-template-columns: 62px 119px;
    justify-content: space-between;
    margin-top: 2px;
    padding: 2px 4px 2px 17px;
    border-top: 1px solid #e0e0e0;
}

.totals-setup {
    grid-template-columns: 118px 1fr 88px 95px;
    column-gap: 2px;
    padding: 2px 17px 2px 187px;
    border-bottom: 0;
}

.totals-setup output:nth-child(2) {
    grid-column: 3;
}

.scrolled {
    display: flex;
    align-items: flex-start;
}

.scrolled .grid {
    flex: 1;
    min-width: 0;
    width: auto;
}

.minibar {
    width: 16px;
    flex: none;
    display: flex;
    flex-direction: column;
    align-items: center;
    gap: 1px;
    border-top: 1px solid #e0e0e0;
}

.minibar b {
    align-self: stretch;
    height: 15px;
    border-bottom: 1px solid #a9a9a9;
}

.minibar u {
    width: 9px;
    height: 2px;
    margin: 0 0 2px;
    background: #2e9247;
}

.minibar button, .scrollbar button {
    display: flex;
    align-items: center;
    justify-content: center;
    width: 15px;
    height: 16px;
    border: 1px solid #a9a9a9;
    background: #fff;
}

.scrollbar {
    width: 17px;
    flex: none;
    display: flex;
    flex-direction: column;
    align-items: center;
    padding: 1px 0;
    background: #efefef;
}

.scrollbar .thumb {
    flex: 1;
    width: 15px;
    margin-bottom: 12px;
    border: 1px solid #a9a9a9;
    background: #fff;
}

.statusbar {
    display: flex;
    justify-content: flex-end;
    align-items: center;
    height: 20px;
    flex: none;
    padding-right: 3px;
    background: #106ebe;
}

.statusbar svg {
    width: 12px;
    height: 12px;
    fill: #8db9df;
}

/* recalculate dialog */
.overlay {
    position: fixed;
    inset: 0;
    display: grid;
    place-items: center;
}

.dialog {
    width: 566px;
    max-width: 100%;
    padding: 0 5px 5px;
    background: #fff;
    border: 1px solid #a9a9a9;
}

.dialog-title {
    display: flex;
    align-items: center;
    gap: 4px;
    height: 19px;
    padding: 2px 1px 0 9px;
}

.dialog-title .icon {
    width: 16px;
}

.dialog-body {
    border: 1px solid #a9a9a9;
    border-top-color: #e0e0e0;
}

.dialog-body p {
    margin: 0;
    padding: 8px 7px 4px 6px;
}

.options {
    display: grid;
    grid-auto-rows: 97px;
    margin: 0 7px;
    padding: 4px 4px 5px;
    border: 1px solid #a9a9a9;
}

.options label {
    display: flex;
    align-items: center;
    gap: 1px;
}

.options span {
    padding: 0 1px;
    line-height: 12px;
}

.options input:checked + span {
    outline: 1px dotted #333;
}

input[type="radio"] {
    appearance: none;
    width: 14px;
    height: 14px;
    border: 1px solid #999;
    border-radius: 50%;
    padding: 3px;
}

input[type="radio"]:checked {
    background: #555;
    background-clip: content-box;
}

.actions {
    display: flex;
    justify-content: flex-end;
    gap: 6px;
    margin-top: 7px;
    padding: 12px 12px 13px;
    border-top: 1px solid #e0e0e0;
}

.actions button {
    width: 75px;
    height: 22px;
    border: 1px solid #a9a9a9;
}

.actions .ok {
    border: 2px solid #106ebe;
}
```
